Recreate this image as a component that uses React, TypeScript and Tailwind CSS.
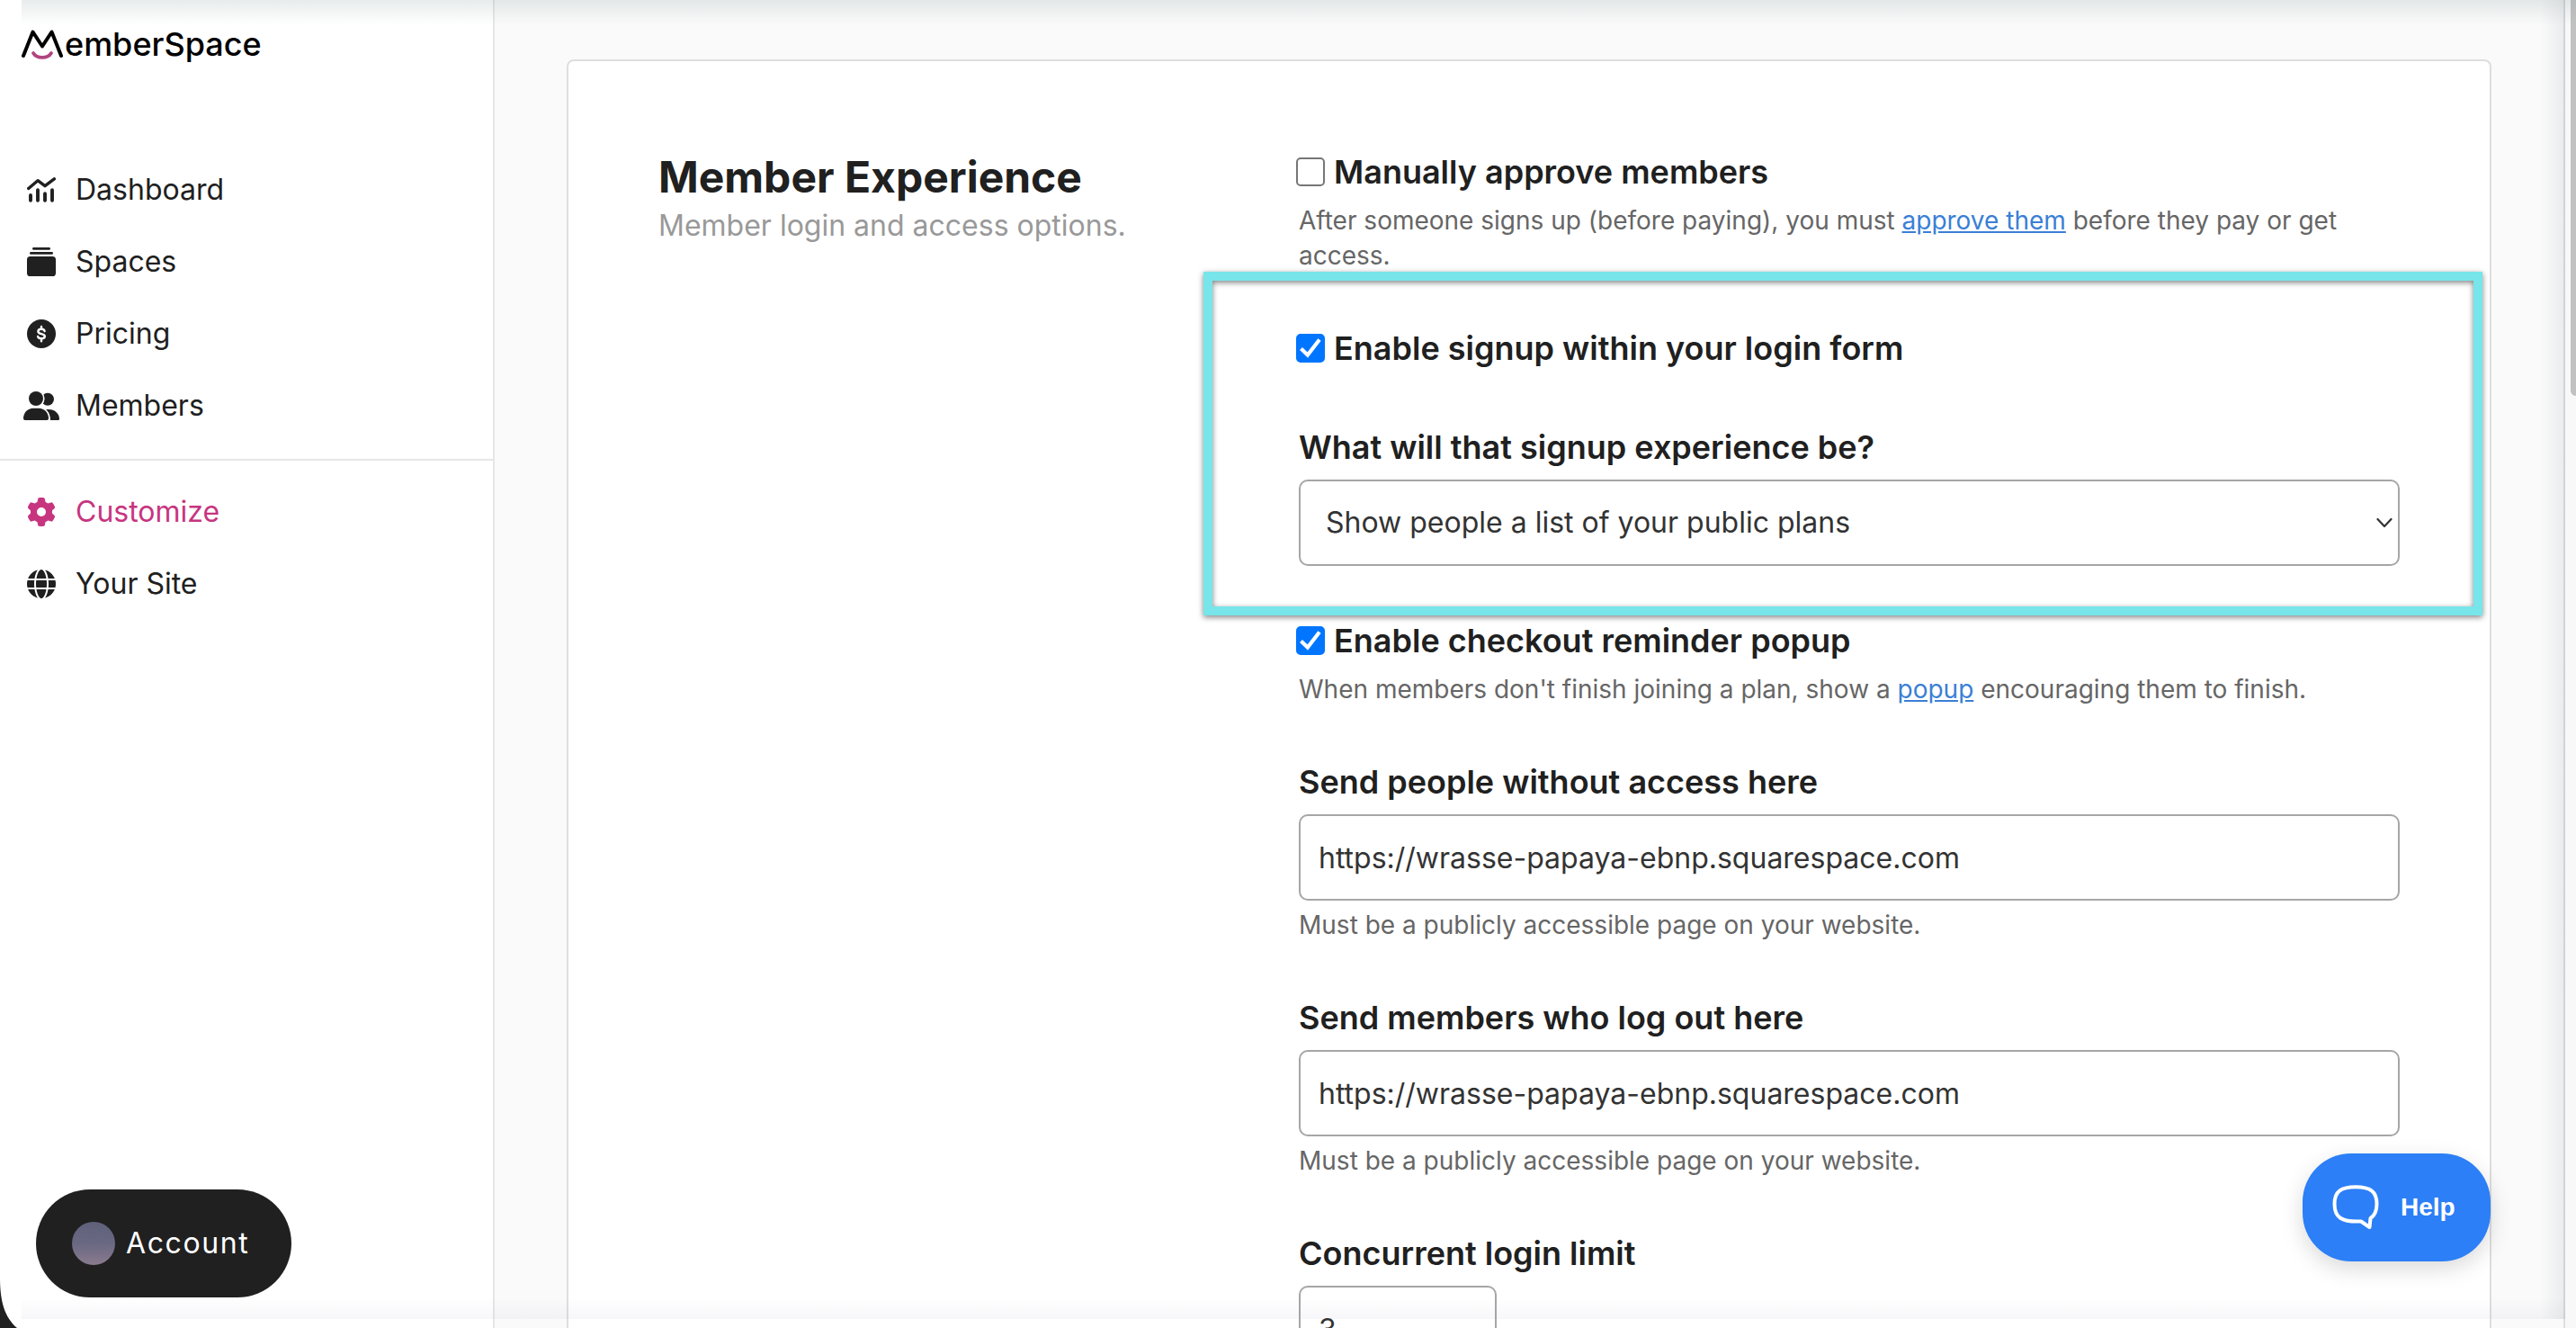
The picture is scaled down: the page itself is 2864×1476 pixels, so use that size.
import { useState } from 'react';
import type { ReactNode } from 'react';
import { FaGear, FaGlobe } from 'react-icons/fa6';

const ChartIcon = () => (
  <svg className="size-8" viewBox="0 0 32 28" fill="none" stroke="currentColor" strokeLinecap="round" strokeLinejoin="round">
    <path d="M1.700 12.500 L12 3.700 L20 9.700 L30.300 1.900" strokeWidth="3.400" />
    <path d="M4 20v5.700M12 14.300v11.400M20 18.300v7.400M28 14.300v11.400" strokeWidth="3.900" />
  </svg>
);

const StackIcon = () => (
  <svg className="size-8" viewBox="0 0 32 32" fill="currentColor">
    <rect x="6" y="0" width="20" height="2.800" rx="1.400" />
    <rect x="3" y="5" width="26" height="2.800" rx="1.400" />
    <rect x="0" y="10" width="32" height="22" rx="3.600" />
  </svg>
);

const DollarIcon = () => (
  <svg className="size-8" viewBox="0 0 32 32" fill="none">
    <circle cx="16" cy="16" r="16" fill="currentColor" />
    <path d="M19.600 13c-.4-1.500-1.800-2.200-3.600-2.200-2 0-3.600.9-3.600 2.600 0 3.600 7.400 1.700 7.400 5.300 0 1.700-1.700 2.600-3.800 2.600-2 0-3.500-.8-3.900-2.300M16 8v2.400M16 21.900v2.300" stroke="#fff" strokeWidth="2.400" strokeLinecap="round" />
  </svg>
);

const PeopleIcon = () => (
  <svg className="h-8 w-10" viewBox="0 0 40 32" fill="currentColor">
    <circle cx="27" cy="8.700" r="7" />
    <path d="M20 20h8c7 0 12 5 12 10.500 0 1-.6 1.500-1.500 1.500H20z" />
    <circle cx="14" cy="8" r="9.600" fill="#fff" />
    <path d="M0 32V17h19c6 1 11 6.500 11 15z" fill="#fff" />
    <circle cx="14" cy="8" r="8" />
    <path d="M11 18.700h6c6.500 0 11 5 11 11.300 0 1.300-.7 2-1.800 2H1.800C.7 32 0 31.300 0 30c0-6.300 4.500-11.300 11-11.300z" />
  </svg>
);

const mainLinks = [
  { name: 'Dashboard', href: '#dashboard', icon: <ChartIcon /> },
  { name: 'Spaces', href: '#spaces', icon: <StackIcon /> },
  { name: 'Pricing', href: '#pricing', icon: <DollarIcon /> },
  { name: 'Members', href: '#members', icon: <PeopleIcon /> },
];

const siteLinks = [
  { name: 'Customize', href: '#customize', icon: <FaGear className="size-8" />, active: true },
  { name: 'Your Site', href: '#your-site', icon: <FaGlobe className="size-8" /> },
];

type NavItem = { name: string; href: string; icon: ReactNode; active?: boolean };

const NavList = ({ links }: { links: NavItem[] }) => (
  <ul>
    {links.map((link) => (
      <li key={link.href}>
        <a
          href={link.href}
          className={`flex h-20 items-center gap-4 pl-6 text-[32px] ${link.active ? 'text-[#c7357f]' : 'text-[#202020]'}`}
        >
          <span className="flex w-11 justify-center">{link.icon}</span>
          {link.name}
        </a>
      </li>
    ))}
  </ul>
);

const Sidebar = () => (
  <aside className="flex w-[550px] shrink-0 flex-col border-r-2 border-[#e6e6e6] bg-white">
    {/* Logo */}
    <a href="#home" className="flex h-[98px] items-center gap-[2px] pl-6 text-[36px] font-medium text-black" aria-label="MemberSpace">
      <svg className="h-9 w-[46px]" viewBox="0 0 46 36" fill="none" strokeLinecap="round" strokeLinejoin="round">
        <path d="M2 31 L12.500 4.500 L23 20.500 L33.500 4.500 L44 31" stroke="#000" strokeWidth="4" />
        <path d="M13 28 C17 34.500 29 34.500 33 28" stroke="#b0457f" strokeWidth="3.800" />
      </svg>
      <span>emberSpace</span>
    </a>

    <nav className="pt-[73px]">
      <NavList links={mainLinks} />
      <hr className="mt-[19px] mb-[17px] border-t-2 border-[#e6e6e6]" />
      <NavList links={siteLinks} />
    </nav>

    {/* Account */}
    <button className="mt-auto mb-[34px] ml-10 flex h-[120px] w-[284px] items-center gap-3 rounded-full bg-[#202020] pl-10 text-[32px] tracking-wider text-white">
      <span className="size-12 rounded-full bg-linear-to-b from-[#5f6179] via-[#696883] to-[#8b7b8d]" />
      Account
    </button>
  </aside>
);

const Field = ({ id, label, help, children }: { id: string; label: string; help?: string; children: ReactNode }) => (
  <div>
    <label htmlFor={id} className="mb-3 block text-[36px] leading-[48px] font-semibold">
      {label}
    </label>
    {children}
    {help && <p className="mt-2 text-[28px] leading-[39px] text-[#666]">{help}</p>}
  </div>
);

const CheckField = ({ id, label, checked = false, children }: { id: string; label: string; checked?: boolean; children?: ReactNode }) => {
  const [on, setOn] = useState(checked);

  return (
    <div>
      <div className="-ml-[3px] flex items-center gap-[10px]">
        <span className="grid size-8">
          <input
            id={id}
            type="checkbox"
            checked={on}
            onChange={() => setOn(!on)}
            className="col-start-1 row-start-1 size-8 appearance-none rounded-[5px] border-2 border-[#767676] bg-white checked:border-[#0075ff] checked:bg-[#0075ff]"
          />
          {on && (
            <svg className="pointer-events-none col-start-1 row-start-1 size-8" viewBox="0 0 32 32" fill="none" stroke="#fff" strokeWidth="4.200">
              <path d="M5.500 16.500 L12.800 23.500 L26 6.500" />
            </svg>
          )}
        </span>
        <label htmlFor={id} className="text-[36px] leading-[48px] font-semibold">
          {label}
        </label>
      </div>
      {children && <p className="mt-[11px] text-[28px] leading-[39px] text-[#666]">{children}</p>}
    </div>
  );
};

const inputStyle = 'block h-24 rounded-[10px] border-2 border-[#a6a6a6] bg-white text-[32px] text-[#333]';

const App = () => {
  const [plan, setPlan] = useState('list');

  return (
    <div className="relative flex h-screen overflow-hidden bg-[#fafafa] font-['Inter',sans-serif] text-[#202020]">
      <Sidebar />

      <main className="min-w-0 flex-1 overflow-hidden px-20 pt-[66px]">
        <section className="flex rounded-lg border-2 border-[#dedede] bg-white px-[100px] pt-[99px] pb-24">
          <header className="w-[712px] shrink-0">
            <h1 className="text-[48px] leading-[60px] font-bold">Member Experience</h1>
            <p className="text-[32px] leading-[48px] text-[#999]">Member login and access options.</p>
          </header>

          <form className="flex min-w-0 flex-1 flex-col gap-[59px]">
            <CheckField id="approve" label="Manually approve members">
              After someone signs up (before paying), you must{' '}
              <a href="#approve" className="text-[#3a7fd5] underline">approve them</a> before they pay or get access.
            </CheckField>

            <div className="relative flex flex-col gap-[62px]">
              {/* Highlight frame */}
              <div className="pointer-events-none absolute -top-[61px] -right-[92px] -bottom-[55px] -left-[106px] border-10 border-[#78e5ea] drop-shadow-[0_2px_3px_rgba(0,0,0,0.5)]" />
              <CheckField id="signup" label="Enable signup within your login form" checked />
              <Field id="experience" label="What will that signup experience be?">
                <div className="relative">
                  <select
                    id="experience"
                    value={plan}
                    onChange={(e) => setPlan(e.target.value)}
                    className={`${inputStyle} w-full appearance-none pl-7`}
                  >
                    <option value="list">Show people a list of your public plans</option>
                  </select>
                  <svg className="pointer-events-none absolute top-10 right-2 h-4 w-[18px]" viewBox="0 0 18 16" fill="none" stroke="#333" strokeWidth="2.200" strokeLinecap="round" strokeLinejoin="round">
                    <path d="M1.500 4 L9 12 L16.500 4" />
                  </svg>
                </div>
              </Field>
            </div>

            <CheckField id="reminder" label="Enable checkout reminder popup" checked>
              When members don't finish joining a plan, show a{' '}
              <a href="#popup" className="text-[#3a7fd5] underline">popup</a> encouraging them to finish.
            </CheckField>

            <Field id="no-access" label="Send people without access here" help="Must be a publicly accessible page on your website.">
              <input id="no-access" type="text" defaultValue="https://wrasse-papaya-ebnp.squarespace.com" className={`${inputStyle} w-full px-5`} />
            </Field>

            <Field id="log-out" label="Send members who log out here" help="Must be a publicly accessible page on your website.">
              <input id="log-out" type="text" defaultValue="https://wrasse-papaya-ebnp.squarespace.com" className={`${inputStyle} w-full px-5`} />
            </Field>

            <Field id="limit" label="Concurrent login limit">
              <input id="limit" type="text" defaultValue="3" className={`${inputStyle} w-[220px] px-5`} />
            </Field>
          </form>
        </section>
      </main>

      {/* Scrollbar */}
      <div className="flex w-[14px] shrink-0 justify-end border-l-2 border-[#dcdfe1] bg-[#f8f8f9]">
        <div className="h-[440px] w-[6px] rounded-bl-lg bg-[#c1c1c1]" />
      </div>

      {/* Soft edges of the window */}
      <div className="pointer-events-none absolute top-0 right-0 left-6 h-7 bg-linear-to-b from-[#8c9ea0]/20 to-transparent" />
      <div className="pointer-events-none absolute top-0 right-3 bottom-[10px] w-7 bg-linear-to-l from-[#8c96a0]/15 to-transparent" />
      <div className="pointer-events-none absolute right-3 bottom-[10px] left-6 h-6 bg-linear-to-t from-[#8c8cb4]/7 to-transparent" />
      <svg className="pointer-events-none absolute bottom-0 left-0 h-14 w-5" viewBox="0 0 20 56" fill="#202020">
        <path d="M0 0 C0 26 5 44 19 56 H0 Z" />
      </svg>

      {/* Help */}
      <button className="absolute right-[95px] bottom-[74px] flex h-[120px] w-[209px] items-center gap-6 rounded-[54px] bg-[#2c7ff6] pl-[33px] font-['Liberation_Sans',sans-serif] text-[28px] font-bold text-white shadow-[0_8px_24px_rgba(0,0,0,0.15)]">
        <svg className="h-[50px] w-[52px]" viewBox="0 0 52 50" fill="none" stroke="currentColor" strokeWidth="4" strokeLinejoin="round">
          <path d="M26 2.200 C42 2.200 49.500 7 49.500 21 C49.500 29 47 34 42.500 37 L41.500 47 L32 40.500 C10 41.500 2.500 36 2.500 21 C2.500 7 10 2.200 26 2.200 Z" />
        </svg>
        Help
      </button>
    </div>
  );
};

export default App;
